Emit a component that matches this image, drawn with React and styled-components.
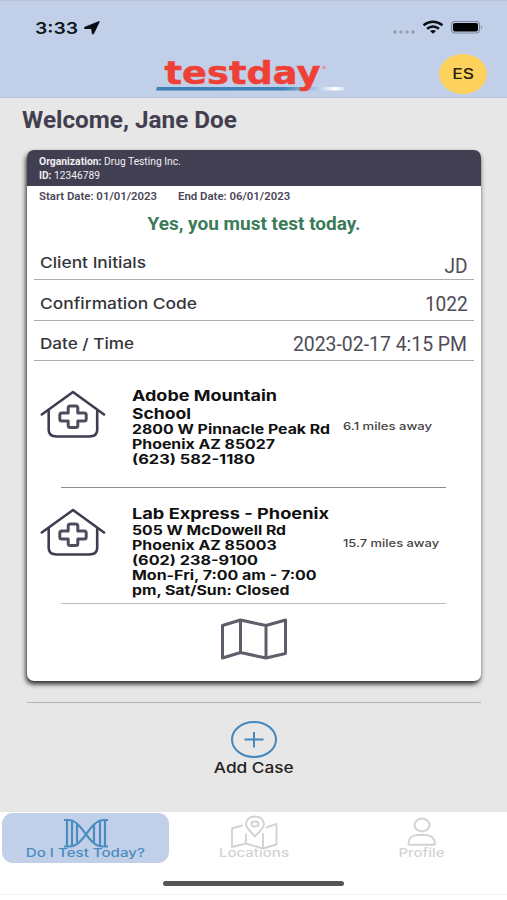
import React from 'react';
import styled, { createGlobalStyle } from 'styled-components';

const Global = createGlobalStyle`
  * { box-sizing: border-box; }
  body { margin: 0; background: #fff; font-family: Inter, sans-serif; }
`;

/* Single line of text, widened horizontally by $k */
const Line = styled.span`
  display: block;
  width: max-content;
  white-space: nowrap;
  font-family: ${(p) => (p.$roboto ? 'Roboto' : 'Inter')}, sans-serif;
  font-size: ${(p) => p.$size}px;
  font-weight: ${(p) => p.$weight || 500};
  line-height: ${(p) => p.$lh || 16}px;
  transform: scaleX(${(p) => p.$k || 1});
  transform-origin: ${(p) => p.$from || 'left'} center;
`;

const Screen = styled.div`
  width: 507px;
  height: 900px;
  display: flex;
  flex-direction: column;
  background: #e7e7e7;
  overflow: hidden;
`;

const Header = styled.header`
  height: 98px;
  flex: none;
  background: #c1d0e8;
  border-top: 1px solid #b5c2d8;
  border-bottom: 1px solid #b9c6dc;
`;

const StatusBar = styled.div`
  height: 53px;
  display: flex;
  align-items: center;
  justify-content: space-between;
  padding: 0 23px 0 35px;
`;

const StatusGroup = styled.div`
  display: flex;
  align-items: center;
  gap: ${(p) => p.$gap}px;
  svg { display: block; }
`;

const Clock = styled(Line)`
  width: 43px;
  color: #10141b;
`;

const Brand = styled.div`
  display: grid;
  grid-template-columns: 156px 1fr 48px;
  padding-right: 20px;
  svg { display: block; margin-top: 3px; }
`;

const Language = styled.button`
  width: 48px;
  height: 40px;
  padding: 0;
  border: 0;
  border-radius: 50%;
  background: #fcd25c;
  color: #29230f;
  display: grid;
  place-items: center;
`;

const Main = styled.main`
  flex: none;
  height: 714px;
  padding: 0 26px 0 27px;
`;

const Welcome = styled.h1`
  margin: 0 0 0 -5px;
  height: 52px;
  padding-top: 8px;
  color: #433f50;
`;

const Card = styled.section`
  height: 531px;
  border-radius: 7px;
  background: #fff;
  overflow: hidden;
  box-shadow: -1px 3px 5px rgba(0, 0, 0, 0.85);
`;

const CardHead = styled.div`
  height: 36px;
  background: #433f52;
  color: #f0eff3;
  padding: 5px 12px;
`;

const Pair = styled.div`
  display: flex;
  gap: ${(p) => p.$gap}px;
`;

const Dates = styled(Pair)`
  height: 18px;
  padding: 4px 12px 0;
  color: #4b4759;
`;

const Verdict = styled.div`
  height: 34px;
  display: flex;
  justify-content: center;
  padding-top: 8px;
  color: #3b7b59;
`;

const Field = styled.div`
  height: ${(p) => p.$h}px;
  margin: 0 7px;
  padding: 0 6.5px 8px 6px;
  border-bottom: 1px solid #adadad;
  display: flex;
  align-items: flex-end;
  justify-content: space-between;
  color: #34343a;
`;

const Value = styled(Line)`
  color: #4e4c57;
  margin-bottom: ${(p) => p.$mb || 0}px;
`;

const Place = styled.article`
  height: ${(p) => p.$h}px;
  display: grid;
  grid-template-columns: 91.5px 211.5px 1fr;
  padding: ${(p) => p.$top}px 0 0 13px;
  color: #111;
  svg { display: block; margin-top: ${(p) => p.$icon}px; }
`;

const Address = styled.div`
  padding-top: 1px;
`;

const Distance = styled.div`
  padding-top: ${(p) => p.$top}px;
  color: #444;
`;

const Rule = styled.hr`
  margin: ${(p) => p.$m};
  border: 0;
  height: 1px;
  background: ${(p) => p.$c};
`;

const MapButton = styled.div`
  display: flex;
  justify-content: center;
  padding-top: 14px;
`;

const AddCase = styled.div`
  display: flex;
  flex-direction: column;
  align-items: center;
  padding: 18px 1px 0 0;
  color: #222;
  svg { display: block; }
`;

const Nav = styled.nav`
  flex: none;
  height: 82px;
  padding: 1px 2px 0;
  display: grid;
  grid-template-columns: 167px 1fr 166px;
  grid-template-rows: 50px 1fr;
  background: #fff;
`;

const Tab = styled.div`
  display: flex;
  flex-direction: column;
  align-items: center;
  padding-top: 2px;
  border-radius: 11px;
  background: ${(p) => (p.$active ? '#c1d0e8' : 'transparent')};
  color: ${(p) => (p.$active ? '#4a8cc0' : '#d3d3d3')};
  svg { display: block; height: 36px; margin-bottom: -6px; flex: none; }
`;

const Indicator = styled.div`
  grid-column: 1 / -1;
  justify-self: center;
  width: 181px;
  height: 5px;
  margin-top: 18px;
  border-radius: 3px;
  background: #555;
`;

const Footer = styled.div`
  flex: 1;
  background: #fff;
  border-top: 1px solid #f3f3f3;
`;

const ClinicIcon = () => (
  <svg width="66" height="50" viewBox="0 0 66 50" fill="none" stroke="#403c50" strokeWidth="2.6" strokeLinecap="round" strokeLinejoin="round">
    <path d="M1.8 25.5 33 3 64 25.5" />
    <path d="M8.7 22v19q0 6.5 8 6.5h32.5q8 0 8-6.5V22" />
    <path d="M30.2 17h5.600q2 0 2 2v5h6.400q2 0 2 2v4q0 2-2 2h-6.400v4.500q0 2-2 2h-5.600q-2 0-2-2v-4.500h-6.400q-2 0-2-2v-4q0-2 2-2h6.400V19q0-2 2-2Z" stroke="#504c5e" strokeWidth="3" />
  </svg>
);

const MapIcon = () => (
  <svg width="68" height="42" viewBox="0 0 68 42" fill="none" stroke="#5f5c6c" strokeWidth="3" strokeLinejoin="round">
    <path d="M2.500 7.500 20.500 2 46 7.500 65.500 2v33.500L46 40 20.500 34.500 2.500 40ZM20.500 2v32.500M46 7.500v33" />
  </svg>
);

const DnaIcon = () => (
  <svg width="46" height="36" viewBox="0 -2 46 36" fill="none" stroke="currentColor" strokeWidth="2.200">
    <path d="M1 3h4C20 3 24 29.500 40 29.500h5M1 29.500h5C22 29.500 26 3 41 3h4" />
    <path d="M4 3v26.500M9 3v26.500M14 7.500v18M31 7.500v18M37 3v26.500M42 3v26.500" />
  </svg>
);

const LocationsIcon = () => (
  <svg width="48" height="36" viewBox="0 0 48 36" fill="none" stroke="currentColor" strokeWidth="1.900" strokeLinejoin="round" strokeLinecap="round">
    <path d="M12 10.500 2 13.500v18.500l14-3.500 17 5 13.500-4V9l-10 3.500M16 19.500v8.500M33 19v14" />
    <path d="M25 21.500c-4-5-9-8-9-12.500 0-4.500 4-7.500 9-7.500s9 3 9 7.500c0 4.500-5 7.500-9 12.500Z" />
    <ellipse cx="25" cy="9" rx="3.500" ry="2.500" />
  </svg>
);

const ProfileIcon = () => (
  <svg width="30" height="36" viewBox="0 0 30 36" fill="none" stroke="currentColor" strokeWidth="2" strokeLinejoin="round">
    <ellipse cx="15" cy="10" rx="7.500" ry="6.500" />
    <path d="M1.500 29C1.500 23.500 5 20 10.500 20h8c5.500 0 9.500 3.500 9.500 9q0 .8-1 .8H2.500q-1 0-1-.8Z" />
  </svg>
);

const Logo = () => (
  <svg width="192" height="42" viewBox="0 0 192 42">
    <defs>
      <linearGradient id="swoosh" x1="0" x2="1">
        <stop offset="0" stopColor="#3a80b4" />
        <stop offset=".68" stopColor="#3f84b8" />
        <stop offset=".86" stopColor="#b3cbe4" />
        <stop offset=".95" stopColor="#fff" />
        <stop offset="1" stopColor="#dce7f3" />
      </linearGradient>
    </defs>
    <path d="M1 30h186q2 1.500 0 3.500H0Z" fill="url(#swoosh)" />
    <text x="8.500" y="26.500" textLength="156" lengthAdjust="spacingAndGlyphs" fontFamily="DejaVu Sans, sans-serif" fontWeight="700" fontSize="32.500" fill="#ee4036" stroke="#ee4036" strokeWidth=".5">testday</text>
    <circle cx="168" cy="10.500" r="1.700" fill="#ee9297" />
  </svg>
);

const LocationArrow = () => (
  <svg width="16" height="14" viewBox="0 0 16 14"><path d="M15.300.500 9.500 12.800q-.8 1-1.200-.3L7.700 7.500H.8Q-.4 7 .9 6.300Z" fill="#080d14" stroke="#080d14" strokeWidth="1" strokeLinejoin="round" /></svg>
);

const StatusIcons = () => (
  <svg width="92" height="16" viewBox="0 0 92 16">
    <g fill="#929fb6">
      <circle cx="3" cy="12" r="1.700" /><circle cx="9" cy="12" r="1.700" /><circle cx="15" cy="12" r="1.700" /><circle cx="21" cy="12" r="1.700" />
    </g>
    <g fill="none" stroke="#080d14" strokeWidth="2.500">
      <path d="M31.500 5.200q9.500-7 19 0" /><path d="M35 8.800q6-4.500 12 0" />
    </g>
    <path d="M38 11q3-2 6 0L41 13.700Z" fill="#080d14" />
    <rect x="59.500" y="1.500" width="28" height="11.500" rx="3.500" fill="none" stroke="#7f8a9f" strokeWidth="1.200" />
    <rect x="61" y="3" width="25" height="8.500" rx="2" fill="#000" />
    <path d="M89.200 5.300q2.300 2 0 4Z" fill="#7f8a9f" />
  </svg>
);

const fields = [
  { label: 'Client Initials', k: 1.157, value: 'JD', vk: 0.98, h: 42, mb: -8 },
  { label: 'Confirmation Code', k: 1.158, value: '1022', vk: 0.98, h: 41, mb: -5 },
  { label: 'Date / Time', k: 1.141, value: '2023-02-17 4:15 PM', vk: 0.995, h: 40, mb: -5 },
];

const places = [
  {
    h: 126, top: 25, icon: 3, distTop: 32,
    name: [['Adobe Mountain', 1.199], ['School', 1.169]],
    lines: [['2800 W Pinnacle Peak Rd', 1.219], ['Phoenix AZ 85027', 1.22], ['(623) 582-1180', 1.263]],
    distance: '6.1 miles away', dk: 1.189, rule: '#8d8d8d',
  },
  {
    h: 115, top: 16, icon: 3, distTop: 31,
    name: [['Lab Express - Phoenix', 1.213]],
    lines: [['505 W McDowell Rd', 1.21], ['Phoenix AZ 85003', 1.22], ['(602) 238-9100', 1.248], ['Mon-Fri, 7:00 am - 7:00', 1.228], ['pm, Sat/Sun: Closed', 1.217]],
    distance: '15.7 miles away', dk: 1.175, rule: '#bdbdbd',
  },
];

export default function App() {
  return (
    <Screen>
      <Global />
      <Header>
        <StatusBar>
          <StatusGroup $gap={6}>
            <Clock $size={16} $weight={600} $k={1.206}>3:33</Clock>
            <LocationArrow />
          </StatusGroup>
          <StatusIcons />
        </StatusBar>
        <Brand>
          <span />
          <Logo />
          <Language><Line $size={14.5} $k={1.2} $from="center">ES</Line></Language>
        </Brand>
      </Header>
      <Main>
        <Welcome><Line $roboto $size={24} $weight={700} $lh={28} $k={1.012}>Welcome, Jane Doe</Line></Welcome>
        <Card>
          <CardHead>
            <Pair $gap={5}>
              <Line $roboto $size={10} $weight={700} $lh={14} $k={1.036}>Organization:</Line>
              <Line $roboto $size={10} $weight={400} $lh={14} $k={1.027}>Drug Testing Inc.</Line>
            </Pair>
            <Pair $gap={3}>
              <Line $roboto $size={10} $weight={700} $lh={14} $k={1.021}>ID:</Line>
              <Line $roboto $size={10} $weight={400} $lh={14} $k={1.023}>12346789</Line>
            </Pair>
          </CardHead>
          <Dates $gap={30}>
            <Line $roboto $size={10.5} $weight={600} $lh={14} $k={1.085}>Start Date: 01/01/2023</Line>
            <Line $roboto $size={10.5} $weight={600} $lh={14} $k={1.085}>End Date: 06/01/2023</Line>
          </Dates>
          <Verdict><Line $roboto $size={19} $weight={700} $lh={24} $from="center">Yes, you must test today.</Line></Verdict>
          {fields.map((f) => (
            <Field key={f.label} $h={f.h}>
              <Line $size={15} $k={f.k}>{f.label}</Line>
              <Value $roboto $size={19.5} $weight={400} $lh={24} $k={f.vk} $from="right" $mb={f.mb}>{f.value}</Value>
            </Field>
          ))}
          {places.map((p) => (
            <React.Fragment key={p.distance}>
              <Place $h={p.h} $top={p.top} $icon={p.icon}>
                <ClinicIcon />
                <Address>
                  {p.name.map(([t, k]) => <Line key={t} $size={15} $weight={700} $lh={17.5} $k={k}>{t}</Line>)}
                  {p.lines.map(([t, k]) => <Line key={t} $size={13} $weight={700} $lh={15.2} $k={k}>{t}</Line>)}
                </Address>
                <Distance $top={p.distTop}><Line $size={11} $k={p.dk}>{p.distance}</Line></Distance>
              </Place>
              <Rule $m="0 35px 0 34px" $c={p.rule} />
            </React.Fragment>
          ))}
          <MapButton><MapIcon /></MapButton>
        </Card>
        <Rule $m="21px 0 0" $c="#b3b3b3" />
        <AddCase>
          <svg width="48" height="38" viewBox="0 0 48 38" fill="none" stroke="#4489bd" strokeWidth="2">
            <ellipse cx="24" cy="18.500" rx="22" ry="17.500" />
            <path d="M14.500 18.500h19M24 11v15.500" />
          </svg>
          <Line $size={15} $k={1.15} $from="center" $lh={18}>Add Case</Line>
        </AddCase>
      </Main>
      <Nav>
        <Tab $active><DnaIcon /><Line $size={12} $k={1.257} $from="center">Do I Test Today?</Line></Tab>
        <Tab><LocationsIcon /><Line $size={12} $k={1.252} $from="center">Locations</Line></Tab>
        <Tab><ProfileIcon /><Line $size={12} $k={1.242} $from="center">Profile</Line></Tab>
        <Indicator />
      </Nav>
      <Footer />
    </Screen>
  );
}
